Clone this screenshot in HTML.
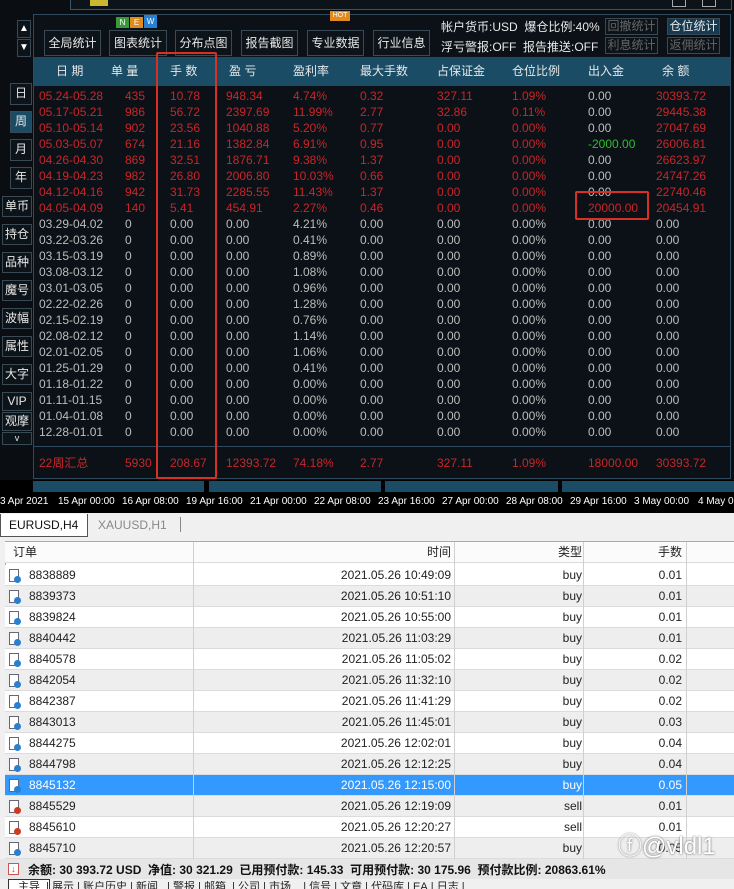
<!DOCTYPE html>
<html><head><meta charset="utf-8">
<style>
*{margin:0;padding:0;box-sizing:border-box}
body{width:734px;height:889px;overflow:hidden;background:#0a0e12;font-family:"Liberation Sans","Noto Sans CJK SC",sans-serif;font-size:12px;position:relative}
.a{position:absolute;white-space:nowrap}
.btn{position:absolute;border:1px solid #3a4a55;background:#0d1419;color:#e8e8e8;font-size:12px;text-align:center;line-height:24px}
.sb{position:absolute;border:1px solid #3a4a55;background:#0d1419;color:#e8e8e8;font-size:12px;text-align:center;line-height:19px}
.r{position:absolute;left:0;width:734px;height:16px;line-height:16px;font-size:12px}
.r span{position:absolute;white-space:nowrap}
.c1{left:39px}.c2{left:125px}.c3{left:170px}.c4{left:226px}.c5{left:293px}.c6{left:360px}.c7{left:437px}.c8{left:512px}.c9{left:588px}.c10{left:656px}
.red{color:#c8262a}.gry{color:#bdbdbd}.grn{color:#2fbf2f}
.tr{position:absolute;left:5px;width:729px;height:21px;line-height:21px;font-size:12px;color:#222;border-bottom:1px solid #dcdcdc}
.tr span{position:absolute;white-space:nowrap}
.o{left:24px}.t{right:283px}.ty{right:152px}.l{right:52px}
.ic{position:absolute;left:4px;top:4px;width:10px;height:13px;border:1px solid #667;background:#fff}
.ic i{position:absolute;left:4px;top:6px;width:7px;height:7px;border-radius:50%;background:#2a7fd0}
.ic.s i{background:#d03a20}
.tl{position:absolute;top:496px;color:#fff;font-size:10px;white-space:nowrap}
</style></head><body>
<div class="a" style="left:70px;top:0;width:662px;height:10px;border:1px solid #3a5566;border-top:none;background:#0d1419"></div>
<div class="a" style="left:90px;top:0;width:18px;height:6px;background:#c9b830"></div>
<div class="a" style="left:672px;top:0;width:14px;height:7px;border:1px solid #aaa;border-top:none"></div>
<div class="a" style="left:702px;top:0;width:14px;height:7px;border:1px solid #aaa;border-top:none"></div>
<div class="a" style="left:33px;top:14px;width:698px;height:465px;border:1px solid #2e4a5c;background:#0b1116"></div>
<div class="a" style="left:17px;top:20px;width:14px;height:18px;background:#0d1419;border:1px solid #3a4a55;color:#fff;font-size:10px;text-align:center;line-height:16px">▲</div>
<div class="a" style="left:17px;top:39px;width:14px;height:18px;background:#0d1419;border:1px solid #3a4a55;color:#fff;font-size:10px;text-align:center;line-height:16px">▼</div>
<div class="btn" style="left:44px;top:30px;width:57px;height:26px">全局统计</div>
<div class="btn" style="left:109px;top:30px;width:58px;height:26px">图表统计</div>
<div class="btn" style="left:175px;top:30px;width:57px;height:26px">分布点图</div>
<div class="btn" style="left:241px;top:30px;width:57px;height:26px">报告截图</div>
<div class="btn" style="left:307px;top:30px;width:57px;height:26px">专业数据</div>
<div class="btn" style="left:373px;top:30px;width:57px;height:26px">行业信息</div>
<div class="a" style="left:116px;top:17px;width:13px;height:11px;background:#3a9a3a;color:#fff;font-size:8px;text-align:center;line-height:11px">N</div>
<div class="a" style="left:130px;top:17px;width:13px;height:11px;background:#e08a20;color:#fff;font-size:8px;text-align:center;line-height:11px">E</div>
<div class="a" style="left:144px;top:15px;width:13px;height:13px;background:#2a80d0;color:#fff;font-size:8px;text-align:center;line-height:13px">W</div>
<div class="a" style="left:330px;top:11px;width:20px;height:10px;background:#e08a20;color:#fff;font-size:7px;text-align:center;line-height:10px">HOT</div>
<div class="a" style="left:441px;top:18px;color:#e8e8e8;font-size:12px">帐户货币:USD&nbsp;&nbsp;爆仓比例:40%</div>
<div class="a" style="left:441px;top:38px;color:#e8e8e8;font-size:12px">浮亏警报:OFF&nbsp;&nbsp;报告推送:OFF</div>
<div class="sb" style="left:605px;top:18px;width:53px;height:17px;line-height:15px;color:#666">回撤统计</div>
<div class="sb" style="left:667px;top:18px;width:53px;height:17px;line-height:15px;background:#163a50">仓位统计</div>
<div class="sb" style="left:605px;top:37px;width:53px;height:17px;line-height:15px;color:#666">利息统计</div>
<div class="sb" style="left:667px;top:37px;width:53px;height:17px;line-height:15px;color:#666">返佣统计</div>
<div class="a" style="left:34px;top:57px;width:696px;height:29px;background:#1a4c66"></div>
<div class="r" style="top:63px;color:#e8e8e8"><span style="left:56px">日 期</span><span style="left:111px">单 量</span><span style="left:170px">手 数</span><span style="left:229px">盈 亏</span><span style="left:293px">盈利率</span><span style="left:360px">最大手数</span><span style="left:437px">占保证金</span><span style="left:512px">仓位比例</span><span style="left:588px">出入金</span><span style="left:662px">余 额</span></div>
<div class="sb" style="left:10px;top:83px;width:22px;height:22px">日</div>
<div class="sb" style="left:10px;top:111px;width:22px;height:22px;background:#1a4c66">周</div>
<div class="sb" style="left:10px;top:139px;width:22px;height:22px">月</div>
<div class="sb" style="left:10px;top:167px;width:22px;height:22px">年</div>
<div class="sb" style="left:2px;top:196px;width:30px;height:21px">单币</div>
<div class="sb" style="left:2px;top:224px;width:30px;height:21px">持仓</div>
<div class="sb" style="left:2px;top:252px;width:30px;height:21px">品种</div>
<div class="sb" style="left:2px;top:280px;width:30px;height:21px">魔号</div>
<div class="sb" style="left:2px;top:308px;width:30px;height:21px">波幅</div>
<div class="sb" style="left:2px;top:336px;width:30px;height:21px">属性</div>
<div class="sb" style="left:2px;top:364px;width:30px;height:21px">大字</div>
<div class="sb" style="left:2px;top:392px;width:30px;height:19px;line-height:17px">VIP</div>
<div class="sb" style="left:2px;top:412px;width:30px;height:19px;line-height:17px">观摩</div>
<div class="sb" style="left:2px;top:432px;width:30px;height:13px;line-height:11px;font-size:9px">v</div>
<div class="r red" style="top:88px"><span class="c1">05.24-05.28</span><span class="c2">435</span><span class="c3">10.78</span><span class="c4">948.34</span><span class="c5">4.74%</span><span class="c6">0.32</span><span class="c7">327.11</span><span class="c8">1.09%</span><span class="c9 gry">0.00</span><span class="c10">30393.72</span></div>
<div class="r red" style="top:104px"><span class="c1">05.17-05.21</span><span class="c2">986</span><span class="c3">56.72</span><span class="c4">2397.69</span><span class="c5">11.99%</span><span class="c6">2.77</span><span class="c7">32.86</span><span class="c8">0.11%</span><span class="c9 gry">0.00</span><span class="c10">29445.38</span></div>
<div class="r red" style="top:120px"><span class="c1">05.10-05.14</span><span class="c2">902</span><span class="c3">23.56</span><span class="c4">1040.88</span><span class="c5">5.20%</span><span class="c6">0.77</span><span class="c7">0.00</span><span class="c8">0.00%</span><span class="c9 gry">0.00</span><span class="c10">27047.69</span></div>
<div class="r red" style="top:136px"><span class="c1">05.03-05.07</span><span class="c2">674</span><span class="c3">21.16</span><span class="c4">1382.84</span><span class="c5">6.91%</span><span class="c6">0.95</span><span class="c7">0.00</span><span class="c8">0.00%</span><span class="c9 grn">-2000.00</span><span class="c10">26006.81</span></div>
<div class="r red" style="top:152px"><span class="c1">04.26-04.30</span><span class="c2">869</span><span class="c3">32.51</span><span class="c4">1876.71</span><span class="c5">9.38%</span><span class="c6">1.37</span><span class="c7">0.00</span><span class="c8">0.00%</span><span class="c9 gry">0.00</span><span class="c10">26623.97</span></div>
<div class="r red" style="top:168px"><span class="c1">04.19-04.23</span><span class="c2">982</span><span class="c3">26.80</span><span class="c4">2006.80</span><span class="c5">10.03%</span><span class="c6">0.66</span><span class="c7">0.00</span><span class="c8">0.00%</span><span class="c9 gry">0.00</span><span class="c10">24747.26</span></div>
<div class="r red" style="top:184px"><span class="c1">04.12-04.16</span><span class="c2">942</span><span class="c3">31.73</span><span class="c4">2285.55</span><span class="c5">11.43%</span><span class="c6">1.37</span><span class="c7">0.00</span><span class="c8">0.00%</span><span class="c9 gry">0.00</span><span class="c10">22740.46</span></div>
<div class="r red" style="top:200px"><span class="c1">04.05-04.09</span><span class="c2">140</span><span class="c3">5.41</span><span class="c4">454.91</span><span class="c5">2.27%</span><span class="c6">0.46</span><span class="c7">0.00</span><span class="c8">0.00%</span><span class="c9">20000.00</span><span class="c10">20454.91</span></div>
<div class="r gry" style="top:216px"><span class="c1">03.29-04.02</span><span class="c2">0</span><span class="c3">0.00</span><span class="c4">0.00</span><span class="c5">4.21%</span><span class="c6">0.00</span><span class="c7">0.00</span><span class="c8">0.00%</span><span class="c9">0.00</span><span class="c10">0.00</span></div>
<div class="r gry" style="top:232px"><span class="c1">03.22-03.26</span><span class="c2">0</span><span class="c3">0.00</span><span class="c4">0.00</span><span class="c5">0.41%</span><span class="c6">0.00</span><span class="c7">0.00</span><span class="c8">0.00%</span><span class="c9">0.00</span><span class="c10">0.00</span></div>
<div class="r gry" style="top:248px"><span class="c1">03.15-03.19</span><span class="c2">0</span><span class="c3">0.00</span><span class="c4">0.00</span><span class="c5">0.89%</span><span class="c6">0.00</span><span class="c7">0.00</span><span class="c8">0.00%</span><span class="c9">0.00</span><span class="c10">0.00</span></div>
<div class="r gry" style="top:264px"><span class="c1">03.08-03.12</span><span class="c2">0</span><span class="c3">0.00</span><span class="c4">0.00</span><span class="c5">1.08%</span><span class="c6">0.00</span><span class="c7">0.00</span><span class="c8">0.00%</span><span class="c9">0.00</span><span class="c10">0.00</span></div>
<div class="r gry" style="top:280px"><span class="c1">03.01-03.05</span><span class="c2">0</span><span class="c3">0.00</span><span class="c4">0.00</span><span class="c5">0.96%</span><span class="c6">0.00</span><span class="c7">0.00</span><span class="c8">0.00%</span><span class="c9">0.00</span><span class="c10">0.00</span></div>
<div class="r gry" style="top:296px"><span class="c1">02.22-02.26</span><span class="c2">0</span><span class="c3">0.00</span><span class="c4">0.00</span><span class="c5">1.28%</span><span class="c6">0.00</span><span class="c7">0.00</span><span class="c8">0.00%</span><span class="c9">0.00</span><span class="c10">0.00</span></div>
<div class="r gry" style="top:312px"><span class="c1">02.15-02.19</span><span class="c2">0</span><span class="c3">0.00</span><span class="c4">0.00</span><span class="c5">0.76%</span><span class="c6">0.00</span><span class="c7">0.00</span><span class="c8">0.00%</span><span class="c9">0.00</span><span class="c10">0.00</span></div>
<div class="r gry" style="top:328px"><span class="c1">02.08-02.12</span><span class="c2">0</span><span class="c3">0.00</span><span class="c4">0.00</span><span class="c5">1.14%</span><span class="c6">0.00</span><span class="c7">0.00</span><span class="c8">0.00%</span><span class="c9">0.00</span><span class="c10">0.00</span></div>
<div class="r gry" style="top:344px"><span class="c1">02.01-02.05</span><span class="c2">0</span><span class="c3">0.00</span><span class="c4">0.00</span><span class="c5">1.06%</span><span class="c6">0.00</span><span class="c7">0.00</span><span class="c8">0.00%</span><span class="c9">0.00</span><span class="c10">0.00</span></div>
<div class="r gry" style="top:360px"><span class="c1">01.25-01.29</span><span class="c2">0</span><span class="c3">0.00</span><span class="c4">0.00</span><span class="c5">0.41%</span><span class="c6">0.00</span><span class="c7">0.00</span><span class="c8">0.00%</span><span class="c9">0.00</span><span class="c10">0.00</span></div>
<div class="r gry" style="top:376px"><span class="c1">01.18-01.22</span><span class="c2">0</span><span class="c3">0.00</span><span class="c4">0.00</span><span class="c5">0.00%</span><span class="c6">0.00</span><span class="c7">0.00</span><span class="c8">0.00%</span><span class="c9">0.00</span><span class="c10">0.00</span></div>
<div class="r gry" style="top:392px"><span class="c1">01.11-01.15</span><span class="c2">0</span><span class="c3">0.00</span><span class="c4">0.00</span><span class="c5">0.00%</span><span class="c6">0.00</span><span class="c7">0.00</span><span class="c8">0.00%</span><span class="c9">0.00</span><span class="c10">0.00</span></div>
<div class="r gry" style="top:408px"><span class="c1">01.04-01.08</span><span class="c2">0</span><span class="c3">0.00</span><span class="c4">0.00</span><span class="c5">0.00%</span><span class="c6">0.00</span><span class="c7">0.00</span><span class="c8">0.00%</span><span class="c9">0.00</span><span class="c10">0.00</span></div>
<div class="r gry" style="top:424px"><span class="c1">12.28-01.01</span><span class="c2">0</span><span class="c3">0.00</span><span class="c4">0.00</span><span class="c5">0.00%</span><span class="c6">0.00</span><span class="c7">0.00</span><span class="c8">0.00%</span><span class="c9">0.00</span><span class="c10">0.00</span></div>
<div class="a" style="left:34px;top:446px;width:696px;height:1px;background:#2e4a5c"></div>
<div class="r red" style="top:455px"><span class="c1">22周汇总</span><span class="c2">5930</span><span class="c3">208.67</span><span class="c4">12393.72</span><span class="c5">74.18%</span><span class="c6">2.77</span><span class="c7">327.11</span><span class="c8">1.09%</span><span class="c9">18000.00</span><span class="c10">30393.72</span></div>
<div class="a" style="left:156px;top:52px;width:61px;height:427px;border:2px solid #d93025;border-radius:2px"></div>
<div class="a" style="left:575px;top:191px;width:74px;height:29px;border:2px solid #d93025;border-radius:2px"></div>
<div class="a" style="left:0;top:480px;width:734px;height:33px;background:#000"></div>
<div class="a" style="left:33px;top:481px;width:171px;height:11px;background:#1a4c66"></div>
<div class="a" style="left:209px;top:481px;width:172px;height:11px;background:#1a4c66"></div>
<div class="a" style="left:385px;top:481px;width:173px;height:11px;background:#1a4c66"></div>
<div class="a" style="left:562px;top:481px;width:172px;height:11px;background:#1a4c66"></div>
<div class="tl" style="left:0">3 Apr 2021</div>
<div class="tl" style="left:58px">15 Apr 00:00</div>
<div class="tl" style="left:122px">16 Apr 08:00</div>
<div class="tl" style="left:186px">19 Apr 16:00</div>
<div class="tl" style="left:250px">21 Apr 00:00</div>
<div class="tl" style="left:314px">22 Apr 08:00</div>
<div class="tl" style="left:378px">23 Apr 16:00</div>
<div class="tl" style="left:442px">27 Apr 00:00</div>
<div class="tl" style="left:506px">28 Apr 08:00</div>
<div class="tl" style="left:570px">29 Apr 16:00</div>
<div class="tl" style="left:634px">3 May 00:00</div>
<div class="tl" style="left:698px">4 May 00:00</div>
<div class="a" style="left:0;top:513px;width:734px;height:376px;background:#f0f0f0"></div>
<div class="a" style="left:0;top:514px;width:88px;height:23px;background:#fff;border:1px solid #555;border-top:none;color:#111;font-size:12px;line-height:22px;padding-left:8px">EURUSD,H4</div>
<div class="a" style="left:98px;top:518px;color:#888;font-size:12px">XAUUSD,H1</div>
<div class="a" style="left:180px;top:517px;width:1px;height:15px;background:#888"></div>
<div class="a" style="left:5px;top:541px;width:729px;height:315px;background:#fff;border-top:1px solid #aaa;border-left:1px solid #aaa"></div>
<div class="tr" style="top:542px;background:#fbfbfb"><span style="left:8px">订单</span><span class="t">时间</span><span class="ty">类型</span><span class="l">手数</span></div>
<div class="tr" style="top:565px;background:#fff"><div class="ic"><i></i></div><span class="o">8838889</span><span class="t">2021.05.26 10:49:09</span><span class="ty">buy</span><span class="l">0.01</span></div>
<div class="tr" style="top:586px;background:#eeeeee"><div class="ic"><i></i></div><span class="o">8839373</span><span class="t">2021.05.26 10:51:10</span><span class="ty">buy</span><span class="l">0.01</span></div>
<div class="tr" style="top:607px;background:#fff"><div class="ic"><i></i></div><span class="o">8839824</span><span class="t">2021.05.26 10:55:00</span><span class="ty">buy</span><span class="l">0.01</span></div>
<div class="tr" style="top:628px;background:#eeeeee"><div class="ic"><i></i></div><span class="o">8840442</span><span class="t">2021.05.26 11:03:29</span><span class="ty">buy</span><span class="l">0.01</span></div>
<div class="tr" style="top:649px;background:#fff"><div class="ic"><i></i></div><span class="o">8840578</span><span class="t">2021.05.26 11:05:02</span><span class="ty">buy</span><span class="l">0.02</span></div>
<div class="tr" style="top:670px;background:#eeeeee"><div class="ic"><i></i></div><span class="o">8842054</span><span class="t">2021.05.26 11:32:10</span><span class="ty">buy</span><span class="l">0.02</span></div>
<div class="tr" style="top:691px;background:#fff"><div class="ic"><i></i></div><span class="o">8842387</span><span class="t">2021.05.26 11:41:29</span><span class="ty">buy</span><span class="l">0.02</span></div>
<div class="tr" style="top:712px;background:#eeeeee"><div class="ic"><i></i></div><span class="o">8843013</span><span class="t">2021.05.26 11:45:01</span><span class="ty">buy</span><span class="l">0.03</span></div>
<div class="tr" style="top:733px;background:#fff"><div class="ic"><i></i></div><span class="o">8844275</span><span class="t">2021.05.26 12:02:01</span><span class="ty">buy</span><span class="l">0.04</span></div>
<div class="tr" style="top:754px;background:#eeeeee"><div class="ic"><i></i></div><span class="o">8844798</span><span class="t">2021.05.26 12:12:25</span><span class="ty">buy</span><span class="l">0.04</span></div>
<div class="tr" style="top:775px;background:#3399ff;color:#fff"><div class="ic"><i></i></div><span class="o">8845132</span><span class="t">2021.05.26 12:15:00</span><span class="ty">buy</span><span class="l">0.05</span></div>
<div class="tr" style="top:796px;background:#eeeeee"><div class="ic s"><i></i></div><span class="o">8845529</span><span class="t">2021.05.26 12:19:09</span><span class="ty">sell</span><span class="l">0.01</span></div>
<div class="tr" style="top:817px;background:#fff"><div class="ic s"><i></i></div><span class="o">8845610</span><span class="t">2021.05.26 12:20:27</span><span class="ty">sell</span><span class="l">0.01</span></div>
<div class="tr" style="top:838px;background:#eeeeee"><div class="ic"><i></i></div><span class="o">8845710</span><span class="t">2021.05.26 12:20:57</span><span class="ty">buy</span><span class="l">0.05</span></div>
<div class="a" style="left:193px;top:542px;width:1px;height:317px;background:#d0d0d0"></div>
<div class="a" style="left:454px;top:542px;width:1px;height:317px;background:#d0d0d0"></div>
<div class="a" style="left:583px;top:542px;width:1px;height:317px;background:#d0d0d0"></div>
<div class="a" style="left:686px;top:542px;width:1px;height:317px;background:#d0d0d0"></div>
<div class="a" style="left:618px;top:826px;color:#fff;font-size:24px;text-shadow:0 0 2px #555">ⓕ@vldl1</div>
<div class="a" style="left:0;top:859px;width:734px;height:20px;background:#e6e6e6"></div>
<div class="a" style="left:8px;top:863px;width:11px;height:12px;background:#fff;border:1px solid #c55;color:#d03020;font-size:9px;line-height:10px;text-align:center">↓</div>
<div class="a" style="left:28px;top:861px;color:#111;font-size:12px;font-weight:bold">余额: 30 393.72 USD&nbsp; 净值: 30 321.29&nbsp; 已用预付款: 145.33&nbsp; 可用预付款: 30 175.96&nbsp; 预付款比例: 20863.61%</div>
<div class="a" style="left:0;top:879px;width:734px;height:10px;background:#f0f0f0;overflow:hidden"></div>
<div class="a" style="left:8px;top:879px;width:42px;height:10px;background:#fff;border:1px solid #333;border-bottom:none"></div>
<div class="a" style="left:18px;top:881px;height:8px;overflow:hidden;color:#222;font-size:11px;line-height:12px">主导&nbsp;&nbsp;| 展示&nbsp;| 账户历史&nbsp;| 新闻&nbsp;&nbsp;&nbsp;| 警报&nbsp;| 邮箱&nbsp;&nbsp;| 公司&nbsp;| 市场&nbsp;&nbsp;&nbsp;&nbsp;| 信号&nbsp;| 文章&nbsp;| 代码库&nbsp;| EA&nbsp;| 日志 |</div>
</body></html>
